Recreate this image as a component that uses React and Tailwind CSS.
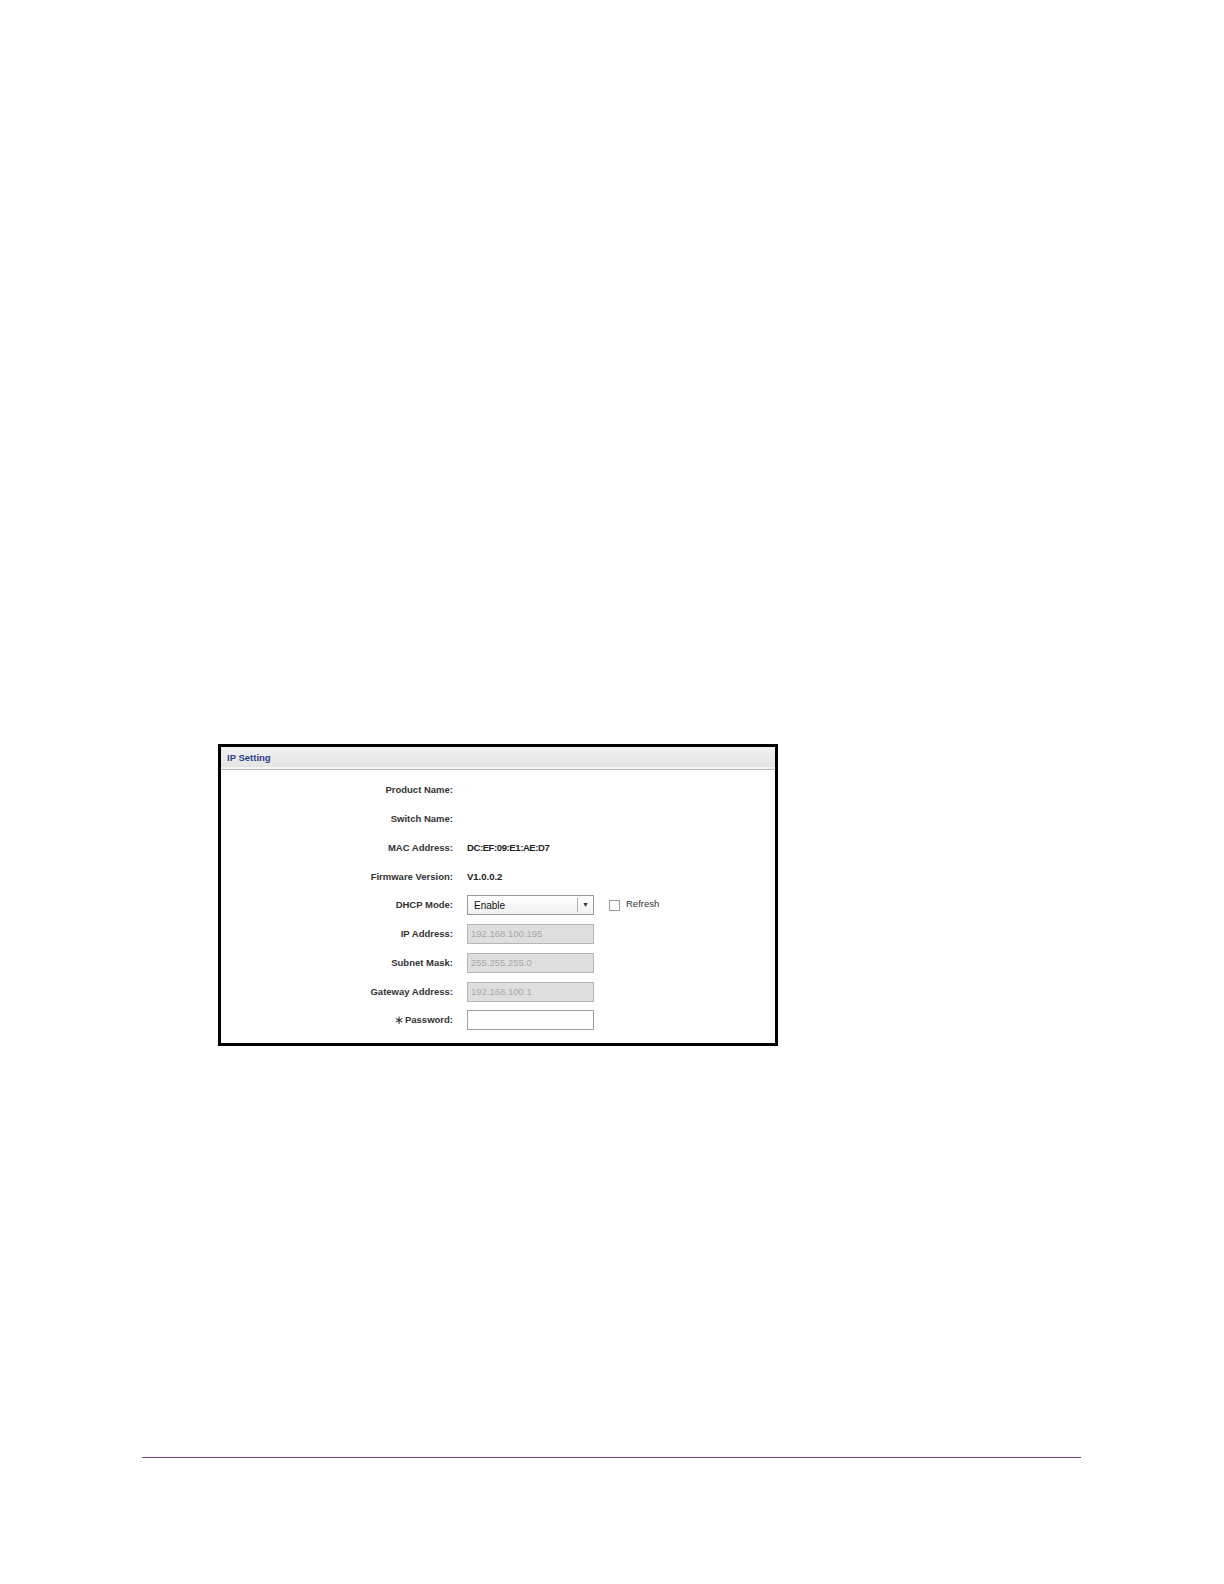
export default function App() {
  const font = { fontFamily: '"Liberation Sans", Arial, sans-serif' };
  const Label = ({ children }) => (
    <div className="flex w-[232px] items-center justify-end text-[9.5px] font-bold text-[#333]">{children}</div>
  );
  const Row = ({ label, children }) => (
    <div className="flex h-[28.75px] items-center gap-[14px]">
      <Label>{label}</Label>
      <div className="flex items-center">{children}</div>
    </div>
  );
  const Disabled = ({ value }) => (
    <div className="flex h-[20px] w-[127px] items-center border border-[#b5b5b5] bg-[#dedede] pl-[3px] text-[9.5px] text-[#a8a8a8]">
      {value}
    </div>
  );
  return (
    <div className="min-h-[1584px] w-[1224px] bg-white pt-[744px]" style={font}>
      <div className="ml-[218px] flex h-[302px] w-[560px] flex-col border-[3px] border-black bg-white">
        <div className="flex h-[23px] items-center border-b border-[#b9b9b9] bg-gradient-to-b from-[#f2f2f2] to-[#e2e2e2] pl-[6px] shadow-[inset_0_-2px_0_#f4f4f4]">
          <span className="text-[9.5px] font-bold text-[#2d3e8c]">IP Setting</span>
        </div>
        <div className="flex flex-col pt-[6px]">
          <Row label="Product Name:" />
          <Row label="Switch Name:" />
          <Row label="MAC Address:">
            <span className="text-[9.5px] font-bold tracking-[-0.4px] text-[#222]">DC:EF:09:E1:AE:D7</span>
          </Row>
          <Row label="Firmware Version:">
            <span className="text-[9.5px] font-bold text-[#222]">V1.0.0.2</span>
          </Row>
          <Row label="DHCP Mode:">
            <div className="flex h-[20px] w-[127px] items-center border border-[#9a9a9a] bg-gradient-to-b from-white to-[#f0f0f0]">
              <span className="flex-1 pl-[6px] text-[10px] text-[#111]">Enable</span>
              <span className="flex h-[14px] w-[16px] items-center justify-center border-l border-[#b0b0b0] text-[7px] text-[#333]">▼</span>
            </div>
            <div className="ml-[15px] flex items-center gap-[6px]">
              <span className="h-[11px] w-[11px] border border-[#9a9a9a] bg-white" />
              <span className="-mt-[2px] text-[9.5px] text-[#333]">Refresh</span>
            </div>
          </Row>
          <Row label="IP Address:">
            <Disabled value="192.168.100.195" />
          </Row>
          <Row label="Subnet Mask:">
            <Disabled value="255.255.255.0" />
          </Row>
          <Row label="Gateway Address:">
            <Disabled value="192.168.100.1" />
          </Row>
          <Row
            label={
              <>
                <span className="mr-[1px] text-[12px] font-normal leading-none">∗</span>
                <span>Password:</span>
              </>
            }
          >
            <div className="h-[20px] w-[127px] border border-[#a0a0a0] bg-white" />
          </Row>
        </div>
      </div>
      <div className="ml-[142px] mt-[411px] h-[1px] w-[939px] bg-[#7b3f8f]" />
    </div>
  );
}
